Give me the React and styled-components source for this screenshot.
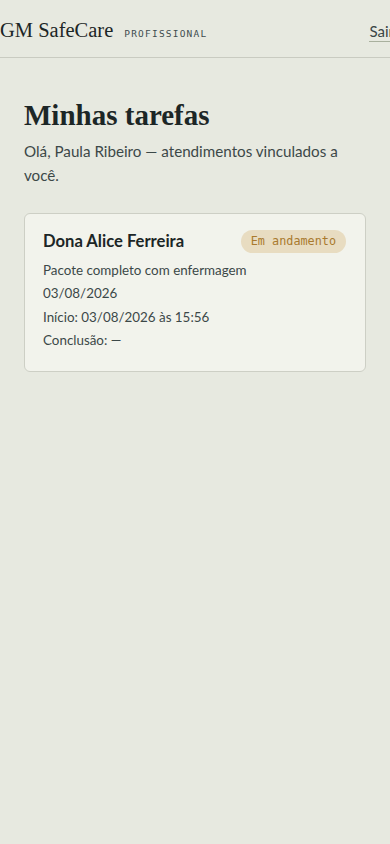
import React from "react";
import styled, { createGlobalStyle } from "styled-components";

const Global = createGlobalStyle`
  html, body { margin: 0; padding: 0; background: #e7e9e0; }
  body { overflow-x: hidden; font-family: "Lato", "Noto Sans", sans-serif; color: #1f2a2a; }
  * { box-sizing: border-box; }
`;

const Header = styled.header`
  border-bottom: 1px solid #c9cbc1;
  height: 58px;
  display: flex;
  align-items: center;
`;

const HeaderInner = styled.div`
  display: flex;
  align-items: baseline;
  justify-content: space-between;
  width: calc(100% + 4px);
  flex-shrink: 0;
  padding-top: 4px;
`;

const Brand = styled.div`
  display: flex;
  align-items: baseline;
  gap: 11px;
`;

const Logo = styled.span`
  font-family: "Liberation Serif", serif;
  font-size: 20.5px;
  color: #1c2626;
`;

const Tag = styled.span`
  font-family: "DejaVu Sans Mono", monospace;
  font-size: 9.5px;
  letter-spacing: 1.2px;
  color: #3f4d4f;
`;

const Logout = styled.a`
  font-size: 15px;
  color: #3a4646;
  text-decoration: none;
  border-bottom: 1px solid #a9b09e;
  padding-bottom: 1px;
`;

const Main = styled.main`
  padding: 40px 24px;
`;

const Title = styled.h1`
  font-family: "Liberation Serif", serif;
  font-weight: 700;
  font-size: 29px;
  margin: 0 0 6px;
  color: #1c2626;
  line-height: 1.2;
`;

const Subtitle = styled.p`
  margin: 0 0 26px;
  font-size: 15.2px;
  line-height: 24px;
  color: #3c4848;
`;

const Card = styled.section`
  background: #f2f3ec;
  border: 1px solid #cdcfc5;
  border-radius: 6px;
  padding: 16px 19px 18px 18px;
`;

const CardHead = styled.div`
  display: flex;
  align-items: center;
  justify-content: space-between;
  margin-bottom: 6px;
`;

const Name = styled.h2`
  margin: 0;
  font-size: 16.6px;
  font-weight: 700;
  color: #1c2626;
`;

const Badge = styled.span`
  font-family: "DejaVu Sans Mono", monospace;
  font-size: 11.8px;
  color: #a97a2e;
  background: #e8dcc1;
  border-radius: 999px;
  padding: 4px 10px;
  line-height: 15px;
`;

const Line = styled.p`
  margin: 0;
  font-size: 13.4px;
  line-height: 23.5px;
  color: #3c4848;
`;

export default function App() {
  return (
    <>
      <Global />
      <Header>
        <HeaderInner>
          <Brand>
            <Logo>GM SafeCare</Logo>
            <Tag>PROFISSIONAL</Tag>
          </Brand>
          <Logout href="#">Sair</Logout>
        </HeaderInner>
      </Header>
      <Main>
        <Title>Minhas tarefas</Title>
        <Subtitle>Olá, Paula Ribeiro — atendimentos vinculados a você.</Subtitle>
        <Card>
          <CardHead>
            <Name>Dona Alice Ferreira</Name>
            <Badge>Em andamento</Badge>
          </CardHead>
          <Line>Pacote completo com enfermagem</Line>
          <Line>03/08/2026</Line>
          <Line>Início: 03/08/2026 às 15:56</Line>
          <Line>Conclusão: —</Line>
        </Card>
      </Main>
    </>
  );
}
